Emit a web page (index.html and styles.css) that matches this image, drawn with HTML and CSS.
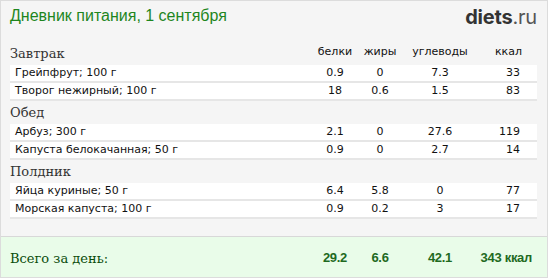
FILE: index.html
```html
<!DOCTYPE html>
<html lang="ru">
<head>
<meta charset="utf-8">
<title>Дневник питания</title>
<link rel="stylesheet" href="styles.css">
</head>
<body>
<div class="widget">
  <div class="header">
    <div class="title">Дневник питания, 1 сентября</div>
    <div class="logo"><span class="logo-main">diets</span><span class="logo-tld">.ru</span></div>
  </div>

  <div class="section">
    <div class="grid head">
      <div class="meal">Завтрак</div>
      <div class="lbl">белки</div>
      <div class="lbl">жиры</div>
      <div class="lbl">углеводы</div>
      <div class="lbl kcal">ккал</div>
    </div>
    <div class="grid row"><div class="name">Грейпфрут; 100 г</div><div class="num">0.9</div><div class="num">0</div><div class="num">7.3</div><div class="num kcal">33</div></div>
    <div class="grid row"><div class="name">Творог нежирный; 100 г</div><div class="num">18</div><div class="num">0.6</div><div class="num">1.5</div><div class="num kcal">83</div></div>
  </div>

  <div class="section">
    <div class="grid head"><div class="meal">Обед</div></div>
    <div class="grid row"><div class="name">Арбуз; 300 г</div><div class="num">2.1</div><div class="num">0</div><div class="num">27.6</div><div class="num kcal">119</div></div>
    <div class="grid row"><div class="name">Капуста белокачанная; 50 г</div><div class="num">0.9</div><div class="num">0</div><div class="num">2.7</div><div class="num kcal">14</div></div>
  </div>

  <div class="section">
    <div class="grid head"><div class="meal">Полдник</div></div>
    <div class="grid row"><div class="name">Яйца куриные; 50 г</div><div class="num">6.4</div><div class="num">5.8</div><div class="num">0</div><div class="num kcal">77</div></div>
    <div class="grid row"><div class="name">Морская капуста; 100 г</div><div class="num">0.9</div><div class="num">0.2</div><div class="num">3</div><div class="num kcal">17</div></div>
  </div>

  <div class="total">
    <div class="grid total-grid">
      <div class="total-label">Всего за день:</div>
      <div class="tnum">29.2</div>
      <div class="tnum">6.6</div>
      <div class="tnum">42.1</div>
      <div class="tnum tkcal">343 ккал</div>
    </div>
  </div>
</div>
</body>
</html>
```

FILE: styles.css
```css
html, body {
  margin: 0;
  padding: 0;
  background: #ffffff;
}

.widget {
  box-sizing: border-box;
  width: 548px;
  height: 278px;
  border: 1px solid #dcdcdc;
  background: #f5f5f5;
  display: flex;
  flex-direction: column;
  font-family: "DejaVu Sans", Verdana, sans-serif;
  font-size: 11px;
  color: #111;
}

.header {
  height: 41px;
  padding: 0 10px 0 9px;
  display: flex;
  justify-content: space-between;
  align-items: flex-start;
}

.title {
  font-family: "Liberation Sans", Arial, sans-serif;
  font-size: 16px;
  line-height: 18px;
  margin-top: 6px;
  color: #1e861e;
}

.logo {
  font-family: Inter, "Open Sans", sans-serif;
  font-size: 20px;
  line-height: 24px;
  margin-top: 4px;
  letter-spacing: -0.2px;
}

.logo-main {
  font-weight: 700;
  color: #333333;
}

.logo-tld {
  font-weight: 400;
  color: #555555;
}

.section {
  padding: 0 10px 0 9px;
}

.grid {
  display: grid;
  grid-template-columns: 300px 50px 40px 80px 1fr;
}

.head {
  height: 23px;
  align-items: end;
}

.meal {
  font-family: "DejaVu Serif", Georgia, serif;
  font-size: 13px;
  line-height: 16px;
  color: #333;
  padding-bottom: 3px;
}

.lbl {
  text-align: center;
  line-height: 16px;
  padding-bottom: 5px;
  color: #111;
}

.lbl.kcal {
  text-align: right;
  padding-right: 15px;
}

.row {
  height: 16px;
  line-height: 16px;
  background: #ffffff;
  border-bottom: 2px solid #e6e6e6;
}

.name {
  padding-left: 5px;
  white-space: nowrap;
}

.num {
  text-align: center;
}

.num.kcal {
  text-align: right;
  padding-right: 17px;
}

.total {
  margin-top: auto;
  height: 40px;
  border-top: 1px solid #d8d8d8;
  background: #e9fce9;
  padding: 0 10px 0 9px;
}

.total-grid {
  height: 40px;
  align-items: center;
}

.total-label {
  font-family: "DejaVu Serif", Georgia, serif;
  font-size: 13px;
  color: #0b4d0b;
  padding-top: 2px;
}

.tnum {
  font-family: "Liberation Sans", Arial, sans-serif;
  font-weight: 700;
  font-size: 13px;
  color: #1f6a1f;
  text-align: center;
  letter-spacing: -0.3px;
}

.tnum.tkcal {
  text-align: right;
  padding-right: 5px;
}
```
